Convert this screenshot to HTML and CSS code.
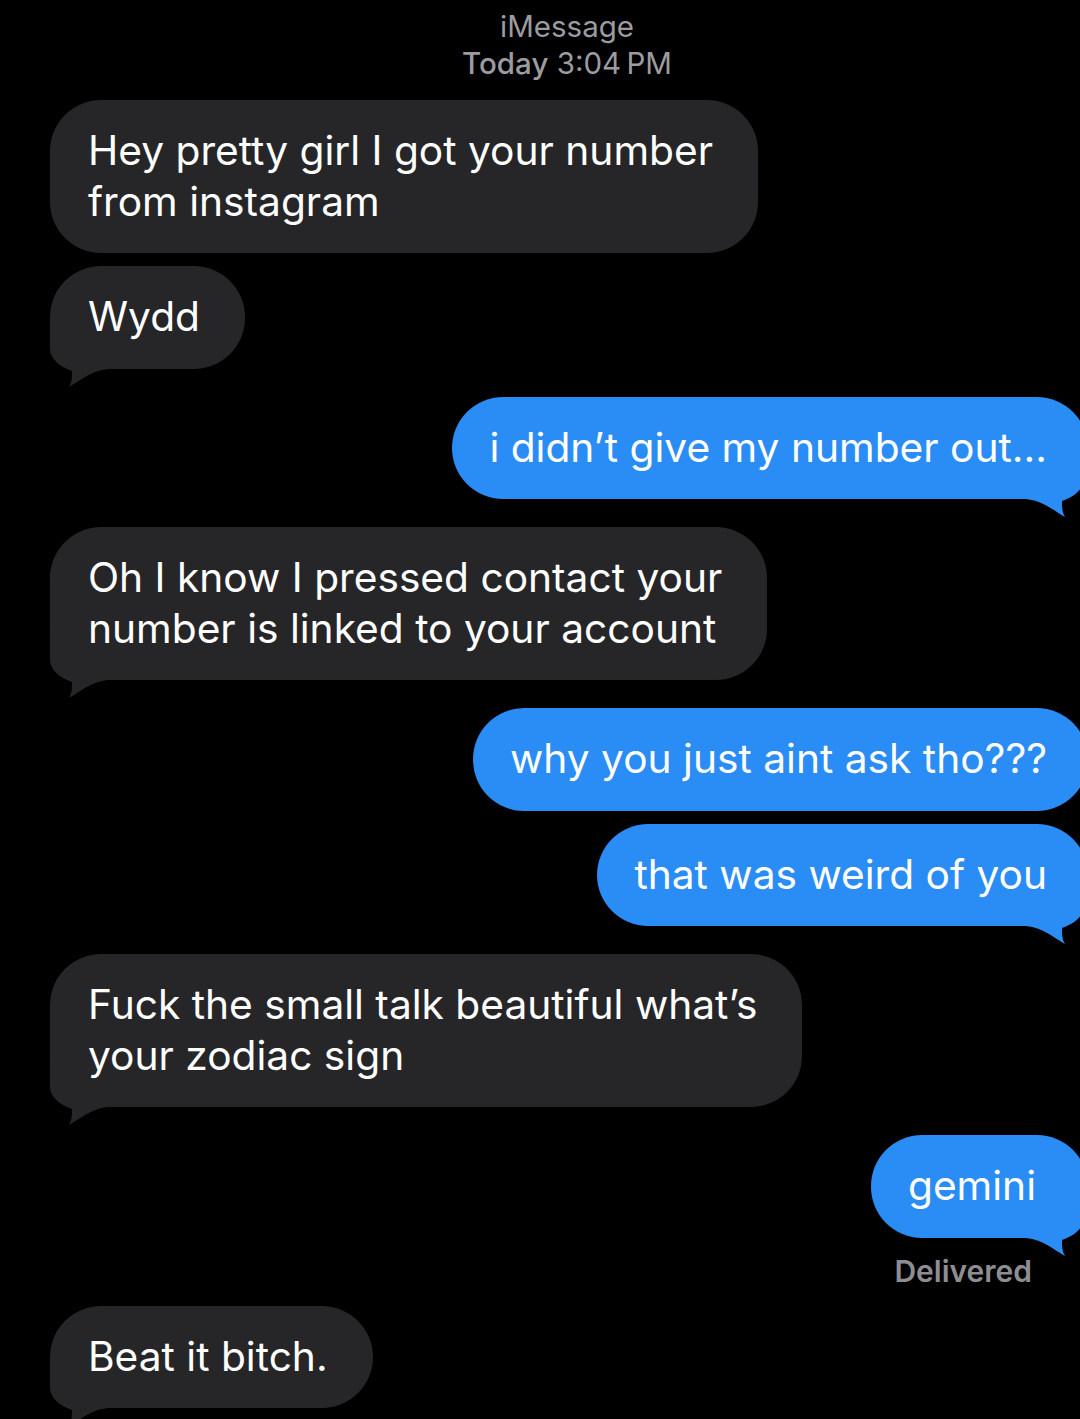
FILE: index.html
```html
<!DOCTYPE html>
<html lang="en">
<head>
<meta charset="utf-8">
<title>iMessage</title>
<link rel="stylesheet" href="styles.css">
</head>
<body>
<div class="screen">
  <header class="header">
    <div class="service">iMessage</div>
    <div class="time"><span class="day">Today</span> 3:04&#8239;PM</div>
  </header>
  <main class="thread">
    <div class="msg them"><span class="txt">Hey pretty girl I got your number<br>from instagram</span></div>
    <div class="msg them gap-s"><span class="txt">Wydd</span><svg class="tail-svg" viewBox="0 0 60 68"><path d="M0,0 L0,30 C0,40 10,48 22,52 C22,58 22,63 19,68 C30,62 40,52 58,50 L60,50 L60,0 Z"/></svg></div>
    <div class="msg me gap-l"><span class="txt">i didn’t give my number out...</span><svg class="tail-svg" viewBox="0 0 60 68"><path d="M0,0 L0,30 C0,40 10,48 22,52 C22,58 22,63 19,68 C30,62 40,52 58,50 L60,50 L60,0 Z"/></svg></div>
    <div class="msg them gap-l"><span class="txt">Oh I know I pressed contact your<br>number is linked to your account</span><svg class="tail-svg" viewBox="0 0 60 68"><path d="M0,0 L0,30 C0,40 10,48 22,52 C22,58 22,63 19,68 C30,62 40,52 58,50 L60,50 L60,0 Z"/></svg></div>
    <div class="msg me gap-l"><span class="txt">why you just aint ask tho???</span></div>
    <div class="msg me gap-s"><span class="txt">that was weird of you</span><svg class="tail-svg" viewBox="0 0 60 68"><path d="M0,0 L0,30 C0,40 10,48 22,52 C22,58 22,63 19,68 C30,62 40,52 58,50 L60,50 L60,0 Z"/></svg></div>
    <div class="msg them gap-l"><span class="txt">Fuck the small talk beautiful what’s<br>your zodiac sign</span><svg class="tail-svg" viewBox="0 0 60 68"><path d="M0,0 L0,30 C0,40 10,48 22,52 C22,58 22,63 19,68 C30,62 40,52 58,50 L60,50 L60,0 Z"/></svg></div>
    <div class="msg me short gap-l"><span class="txt">gemini</span><svg class="tail-svg" viewBox="0 0 60 68"><path d="M0,0 L0,30 C0,40 10,48 22,52 C22,58 22,63 19,68 C30,62 40,52 58,50 L60,50 L60,0 Z"/></svg></div>
    <div class="status">Delivered</div>
    <div class="msg them"><span class="txt">Beat it bitch.</span><svg class="tail-svg" viewBox="0 0 60 68"><path d="M0,0 L0,30 C0,40 10,48 22,52 C22,58 22,63 19,68 C30,62 40,52 58,50 L60,50 L60,0 Z"/></svg></div>
  </main>
</div>
</body>
</html>
```

FILE: styles.css
```css
html, body {
  margin: 0;
  padding: 0;
  background: #000;
}
body {
  width: 1080px;
  height: 1419px;
  overflow: hidden;
  font-family: Inter, "Liberation Sans", sans-serif;
  color: #fff;
}
.screen {
  display: flex;
  flex-direction: column;
}
.header {
  padding: 8px 0 0 54px;
  text-align: center;
  color: #9c9ca0;
  font-size: 29.5px;
  line-height: 37px;
}
.time .day {
  font-weight: 500;
}
.thread {
  display: flex;
  flex-direction: column;
  align-items: flex-start;
  padding: 18px 0 0 50px;
}
.msg {
  position: relative;
  font-size: 40.7px;
  line-height: 50.5px;
  padding: 26px 45px 26px 38px;
  border-radius: 51px;
  white-space: nowrap;
}
.txt {
  position: relative;
  z-index: 1;
}
.them {
  background: #262628;
  fill: #262628;
}
.me {
  align-self: flex-end;
  margin-right: -8px;
  padding: 26px 41px 26px 37px;
  background: #2a8cf5;
  fill: #2a8cf5;
}
.me.short {
  padding-right: 52px;
}
.gap-s { margin-top: 13px; }
.gap-l { margin-top: 28px; }
.tail-svg {
  position: absolute;
  bottom: -18px;
  width: 60px;
  height: 68px;
  z-index: 0;
}
.them .tail-svg { left: 0; }
.me .tail-svg { right: 4px; transform: scaleX(-1); }
.status {
  align-self: flex-end;
  margin: 13px 48px 0 0;
  font-weight: 600;
  font-size: 30px;
  line-height: 40px;
  color: #8e8e92;
}
.status + .msg { margin-top: 15px; }
```
